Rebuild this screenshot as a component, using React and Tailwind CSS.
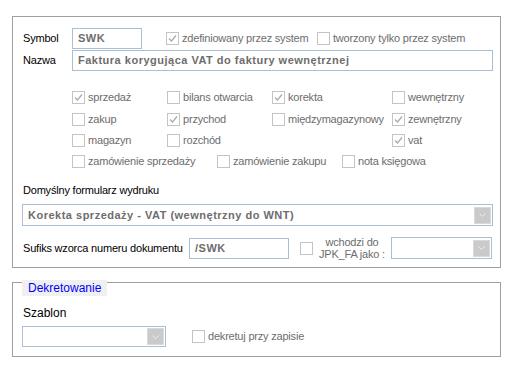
import React from 'react';

const font = { fontFamily: '"Liberation Sans", Arial, sans-serif' };

function Check({ checked, label, className = '' }) {
  return (
    <div className={`flex items-center gap-[3px] ${className}`}>
      <span className="w-[13px] h-[13px] border border-[#c4c4c4] bg-white flex items-center justify-center shrink-0">
        {checked && (
          <svg width="9" height="9" viewBox="0 0 9 9">
            <path d="M1 4.5 L3.5 7 L8 1.5" fill="none" stroke="#a8a8a8" strokeWidth="1.2" />
          </svg>
        )}
      </span>
      {label && <span className="text-[11px] text-[#6d6d6d] leading-none whitespace-nowrap tracking-[-0.2px]">{label}</span>}
    </div>
  );
}

function Field({ value, className = '' }) {
  return (
    <div className={`h-[21px] border border-[#a9bfd6] bg-white flex items-center px-[5px] text-[11px] font-bold text-[#6d6d6d] tracking-[0.5px] whitespace-nowrap overflow-hidden ${className}`}>
      {value}
    </div>
  );
}

function Select({ value, className = '' }) {
  return (
    <div className={`h-[21px] border border-[#a9bfd6] bg-white flex items-center pl-[5px] pr-px text-[11px] font-bold text-[#6d6d6d] tracking-[0.5px] whitespace-nowrap ${className}`}>
      <span className="flex-1 overflow-hidden">{value}</span>
      <span className="w-[17px] h-[17px] bg-[#cacaca] border border-[#d9d9d9] flex items-center justify-center">
        <svg width="7" height="4" viewBox="0 0 7 4">
          <path d="M0.5 0.5 L3.5 3.5 L6.5 0.5" fill="none" stroke="#ececec" strokeWidth="1" />
        </svg>
      </span>
    </div>
  );
}

export default function App() {
  return (
    <div className="w-[510px] h-[367px] bg-white text-black" style={font}>
      <div className="ml-[12px] pt-[16px]">
        <div className="w-[489px] h-[252px] border border-[#a0a0a0] pl-[10px] pt-[11px] text-[11px] tracking-[-0.2px]">
          <div className="flex items-center">
            <span className="w-[49px]">Symbol</span>
            <Field value="SWK" className="w-[70px]" />
            <Check checked label="zdefiniowany przez system" className="ml-[24px] w-[151px]" />
            <Check label="tworzony tylko przez system" />
          </div>
          <div className="flex items-center mt-px">
            <span className="w-[49px]">Nazwa</span>
            <Field value="Faktura korygująca VAT do faktury wewnętrznej" className="w-[421px]" />
          </div>

          <div className="ml-[49px] mt-[16px] grid grid-cols-[95px_105px_120px_100px]">
            <Check checked label="sprzedaż" className="h-[21px]" />
            <Check label="bilans otwarcia" className="h-[21px]" />
            <Check checked label="korekta" className="h-[21px]" />
            <Check label="wewnętrzny" className="h-[21px]" />
            <Check label="zakup" className="h-[22px]" />
            <Check checked label="przychod" className="h-[22px]" />
            <Check label="międzymagazynowy" className="h-[22px]" />
            <Check checked label="zewnętrzny" className="h-[22px]" />
            <Check label="magazyn" className="h-[21px]" />
            <Check label="rozchód" className="h-[21px]" />
            <span />
            <Check checked label="vat" className="h-[21px]" />
          </div>
          <div className="ml-[49px] flex h-[21px] items-center">
            <Check label="zamówienie sprzedaży" className="w-[145px]" />
            <Check label="zamówienie zakupu" className="w-[125px]" />
            <Check label="nota księgowa" />
          </div>

          <div className="mt-[11px] leading-[14px]">Domyślny formularz wydruku</div>
          <Select value="Korekta sprzedaży - VAT (wewnętrzny do WNT)" className="mt-[7px] -ml-px w-[471px] h-[22px]" />

          <div className="flex items-center mt-[10px]">
            <span className="w-[166px]">Sufiks wzorca numeru dokumentu</span>
            <Field value="/SWK" className="w-[100px]" />
            <Check className="ml-[11px]" />
            <div className="w-[78px] text-center leading-[12px] text-[#6d6d6d]">
              wchodzi do<br />JPK_FA jako :
            </div>
            <Select value="" className="w-[101px] h-[22px]" />
          </div>
        </div>

        <div className="relative mt-[14px] w-[489px] h-[75px] border border-[#a0a0a0] pl-[10px] pt-[22px]">
          <div className="absolute left-[9px] -top-[3px] h-[16px] px-[6px] bg-[#f0f0f0] text-[#0000ff] text-[12px] leading-[16px]">
            Dekretowanie
          </div>
          <div className="text-[12px] leading-[16px]">Szablon</div>
          <div className="flex items-center mt-[5px]">
            <Select value="" className="-ml-px w-[144px]" />
            <Check label="dekretuj przy zapisie" className="ml-[26px]" />
          </div>
        </div>
      </div>
    </div>
  );
}
